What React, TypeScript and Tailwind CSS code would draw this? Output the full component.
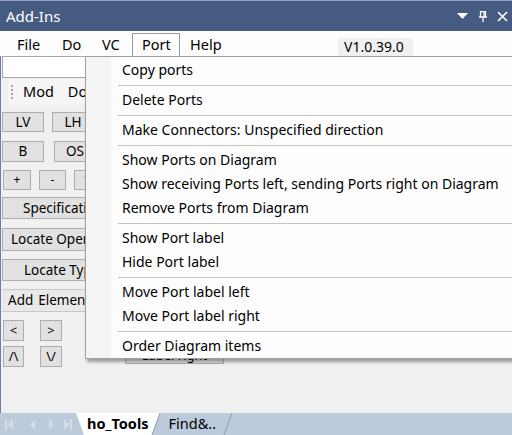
import React from "react";

const F = { fontFamily: '"Noto Sans", "Open Sans", sans-serif' };

function Btn({ className, children }: { className: string; children?: React.ReactNode }) {
  return (
    <div className={"flex items-center justify-center whitespace-nowrap border border-[#adadad] bg-[#e1e1e1] text-[13.5px] text-black " + className}>
      {children}
    </div>
  );
}

const items: (string | null)[] = [
  "Copy ports",
  null,
  "Delete Ports",
  null,
  "Make Connectors: Unspecified direction",
  null,
  "Show Ports on Diagram",
  "Show receiving Ports left, sending Ports right on Diagram",
  "Remove Ports from Diagram",
  null,
  "Show Port label",
  "Hide Port label",
  null,
  "Move Port label left",
  "Move Port label right",
  null,
  "Order Diagram items",
];

export default function App() {
  return (
    <div className="relative flex h-[435px] w-[512px] flex-col overflow-hidden bg-[#f0f0f0]" style={F}>
      {/* Title bar */}
      <div className="flex h-[31px] shrink-0 items-center border-t border-[#8fa0bf] bg-[#465b81] pl-[6px] pr-[4px]">
        <span className="text-[15px] text-white">Add-Ins</span>
        <div className="ml-auto flex items-center gap-[10px]">
          <svg width="11" height="6" viewBox="0 0 11 6"><path d="M0 0H11L5.5 6Z" fill="#fff" /></svg>
          <svg width="8" height="11" viewBox="0 0 8 11" className="ml-[1px]">
            <path d="M1.5 0.5H6.5V6H1.5Z M0 6H8 M4 6V11" stroke="#fff" strokeWidth="1.3" fill="none" />
            <path d="M5 1V6" stroke="#fff" strokeWidth="1.3" />
          </svg>
          <svg width="11" height="11" viewBox="0 0 11 11"><path d="M1 1L10 10M10 1L1 10" stroke="#fff" strokeWidth="1.6" /></svg>
        </div>
      </div>

      {/* Menu bar */}
      <div className="flex h-[25px] shrink-0 items-stretch bg-[#fdfdfd] pl-[7px] pt-[2px] text-[14.5px] text-black">
        <div className="w-[45px] pl-[10px] pt-[1px]">File</div>
        <div className="w-[40px] pl-[10px] pt-[1px]">Do</div>
        <div className="w-[40px] pl-[10px] pt-[1px]">VC</div>
        <div className="w-[48px] border border-b-0 border-[#9a9a9a] pl-[9px]">Port</div>
        <div className="w-[50px] pl-[10px] pt-[1px]">Help</div>
        <div className="ml-[108px] mt-[5px] w-[75px] bg-[#f0f0f0] pl-[6px] text-[14px] leading-[18px]">V1.0.39.0</div>
      </div>

      {/* Content */}
      <div className="flex flex-1 flex-col border-l border-[#6c7fa3]">
        <div className="ml-[1px] h-[22px] w-[200px] border border-[#a8a8a8] bg-white" />
        <div className="ml-[7px] mt-[1px] flex h-[26px] w-[200px] items-center bg-[#f5f5f5] text-[14.5px]">
          <div className="ml-[3px] flex flex-col gap-[2px]">
            <span className="h-[2px] w-[2px] bg-[#a0a0a0]" />
            <span className="h-[2px] w-[2px] bg-[#a0a0a0]" />
            <span className="h-[2px] w-[2px] bg-[#a0a0a0]" />
            <span className="h-[2px] w-[2px] bg-[#a0a0a0]" />
          </div>
          <span className="ml-[10px]">Mod</span>
          <span className="ml-[14px]">Do</span>
        </div>

        <div className="ml-[1px] mt-[7px] flex gap-[8px]">
          <Btn className="h-[20px] w-[42px]">LV</Btn>
          <Btn className="h-[20px] w-[42px]">LH</Btn>
        </div>
        <div className="ml-[1px] mt-[9px] flex gap-[10px]">
          <Btn className="h-[21px] w-[42px]">B</Btn>
          <Btn className="h-[21px] w-[42px]">OS</Btn>
        </div>
        <div className="ml-[2px] mt-[8px] flex gap-[8px]">
          <Btn className="h-[20px] w-[28px] !text-[12px]">+</Btn>
          <Btn className="h-[20px] w-[27px] !text-[12px]">-</Btn>
          <Btn className="h-[20px] w-[27px] !text-[12px]">*</Btn>
        </div>
        <Btn className="ml-[1px] mt-[7px] h-[22px] w-[126px] !justify-start pl-[20px]">Specification</Btn>
        <Btn className="ml-[1px] mt-[9px] h-[23px] w-[126px] !justify-start pl-[8px]">Locate Operation</Btn>
        <Btn className="ml-[1px] mt-[8px] h-[22px] w-[126px] !justify-start pl-[21px]">Locate Type</Btn>
        <div className="ml-[1px] mt-[8px] flex h-[23px] w-[200px] items-center border-y border-[#c8c8c8] bg-[#e9e9e9] pl-[6px] text-[13.5px]">
          <span>Add</span>
          <span className="ml-[5px]">Element</span>
        </div>
        <div className="flex">
          <div className="flex flex-col">
            <div className="ml-[2px] mt-[8px] flex gap-[16px]">
              <Btn className="h-[21px] w-[21px] !text-[13px]">&lt;</Btn>
              <Btn className="h-[21px] w-[22px] !text-[13px]">&gt;</Btn>
            </div>
            <div className="ml-[2px] mt-[5px] flex gap-[16px]">
              <Btn className="h-[21px] w-[21px] !text-[13px]">/\</Btn>
              <Btn className="h-[21px] w-[22px] !text-[13px]">\/</Btn>
            </div>
          </div>
          <Btn className="ml-[63px] mt-[30px] h-[22px] w-[99px] pt-[5px] !text-[13px]">Label right</Btn>
        </div>
      </div>

      {/* Tab strip */}
      <div className="relative flex h-[22px] shrink-0 items-center bg-[#bccadb]">
        <svg className="absolute inset-0" width="512" height="22" viewBox="0 0 512 22">
          <path d="M76 0H160L152 22H84Z" fill="#fff" />
          <path d="M160 0L152 22" stroke="#8d9cb3" strokeWidth="1" fill="none" />
          <path d="M232 0L224 22" stroke="#8d9cb3" strokeWidth="1" fill="none" />
          <g fill="#d5dde8">
            <rect x="5" y="6" width="2" height="11" />
            <path d="M8 11.5L13 6V17Z" />
            <path d="M30 11.5L35 6V17Z" />
            <path d="M49 6L54 11.5L49 17Z" />
            <path d="M64 6L69 11.5L64 17Z" />
            <rect x="70" y="6" width="2" height="11" />
          </g>
        </svg>
        <span className="relative ml-[87px] text-[14.5px] font-bold text-black">ho_Tools</span>
        <span className="relative ml-[20px] text-[14.5px] text-black">Find&amp;..</span>
      </div>

      {/* Dropdown menu */}
      <div className="absolute left-[85px] top-[56px] h-[303px] w-[460px] border border-[#a0a0a0] bg-[linear-gradient(to_right,#f4f4f4_25px,#fdfdfd_25px)] pt-[1px] text-[14px] text-black shadow-[2px_3px_3px_rgba(0,0,0,0.35)]">
        {items.map((t, i) =>
          t === null ? (
            <div key={i} className="flex h-[6px] items-center">
              <div className="ml-[32px] h-px flex-1 bg-[#c4c4c4]" />
            </div>
          ) : (
            <div key={i} className="flex h-[24px] items-center whitespace-nowrap pb-[2px] pl-[36px]">
              {t}
            </div>
          )
        )}
      </div>
    </div>
  );
}
